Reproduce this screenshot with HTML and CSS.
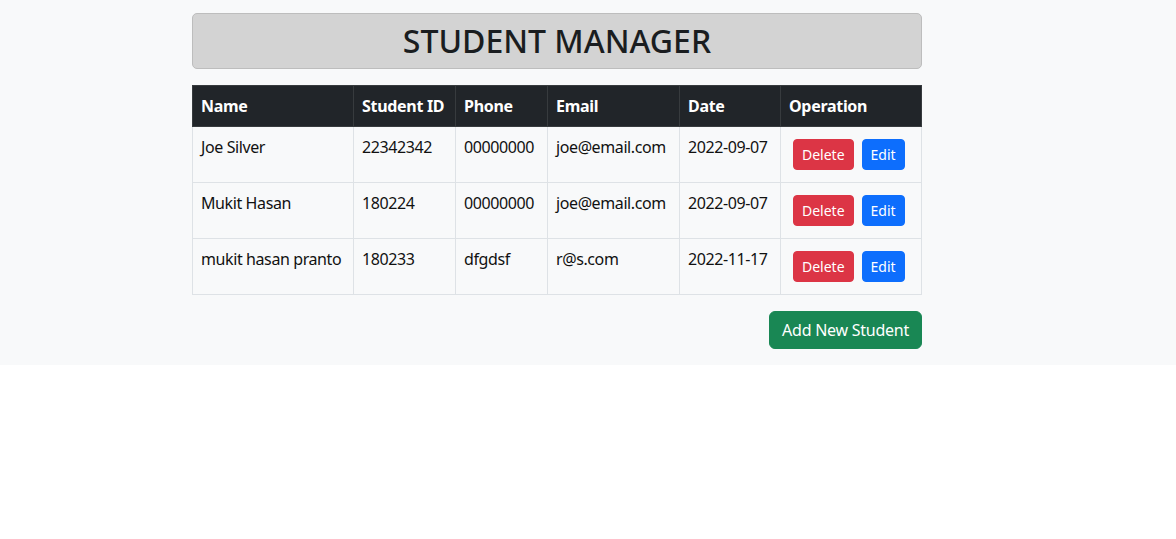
FILE: index.html
```html
<!DOCTYPE html>
<html lang="en">
<head>
<meta charset="utf-8">
<title>Student Manager</title>
<link rel="stylesheet" href="styles.css">
</head>
<body>
<div class="page">
  <div class="wrap">
    <div class="title-box"><h2 class="title">STUDENT MANAGER</h2></div>
    <table class="students">
      <colgroup>
        <col class="c-name"><col class="c-id"><col class="c-phone"><col class="c-email"><col class="c-date"><col class="c-op">
      </colgroup>
      <thead>
        <tr><th>Name</th><th>Student ID</th><th>Phone</th><th>Email</th><th>Date</th><th>Operation</th></tr>
      </thead>
      <tbody>
        <tr><td>Joe Silver</td><td>22342342</td><td>00000000</td><td>joe@email.com</td><td>2022-09-07</td><td><button class="btn btn-red">Delete</button><button class="btn btn-blue">Edit</button></td></tr>
        <tr><td>Mukit Hasan</td><td>180224</td><td>00000000</td><td>joe@email.com</td><td>2022-09-07</td><td><button class="btn btn-red">Delete</button><button class="btn btn-blue">Edit</button></td></tr>
        <tr><td>mukit hasan pranto</td><td>180233</td><td>dfgdsf</td><td>r@s.com</td><td>2022-11-17</td><td><button class="btn btn-red">Delete</button><button class="btn btn-blue">Edit</button></td></tr>
      </tbody>
    </table>
    <div class="actions"><button class="btn-add">Add New Student</button></div>
  </div>
</div>
</body>
</html>
```
FILE: styles.css
```css
* { box-sizing: border-box; }
html, body { margin: 0; padding: 0; background: #fff; }
body {
  font-family: "Noto Sans", "Open Sans", sans-serif;
  font-size: 16px;
  line-height: 1.5;
  color: #212529;
}
.page {
  background: #f8f9fa;
  padding: 13px 0 16px;
}
.wrap {
  width: 730px;
  margin-left: 192px;
}
.title-box {
  height: 56px;
  background: #d3d3d3;
  border: 1px solid #bdbdbd;
  border-radius: 5px;
  display: flex;
  align-items: center;
  justify-content: center;
}
.title {
  margin: 0;
  font-size: 32px;
  font-weight: 500;
  line-height: 1.2;
  color: #1a1d20;
}
.students {
  margin-top: 16px;
  width: 729px;
  border-collapse: collapse;
  table-layout: fixed;
}
.c-name { width: 161px; }
.c-id { width: 102px; }
.c-phone { width: 92px; }
.c-email { width: 132px; }
.c-date { width: 101px; }
.c-op { width: 141px; }
.students th, .students td {
  padding: 8px;
  text-align: left;
  vertical-align: top;
  white-space: nowrap;
  border: 1px solid #dee2e6;
  letter-spacing: -0.4px;
}
.students th {
  background: #212529;
  color: #fff;
  font-weight: 700;
  border-color: #373b3e;
  letter-spacing: -0.3px;
}
.students td {
  background: #f8f9fa;
  height: 56px;
  color: #111;
}
.btn {
  margin: 4px;
  font-family: inherit;
  font-size: 14px;
  line-height: 1.5;
  padding: 4px 8px;
  border-radius: 4px;
  border: 1px solid transparent;
  color: #fff;
  cursor: pointer;
  letter-spacing: 0;
}
.btn-red { background: #dc3545; border-color: #dc3545; }
.btn-blue { background: #0d6efd; border-color: #0d6efd; }
.actions {
  display: flex;
  justify-content: flex-end;
  margin-top: 16px;
}
.btn-add {
  font-family: inherit;
  font-size: 16px;
  line-height: 1.5;
  padding: 6px 12px;
  border-radius: 6px;
  border: 1px solid #198754;
  background: #198754;
  color: #fff;
  cursor: pointer;
  letter-spacing: -0.25px;
}
```
